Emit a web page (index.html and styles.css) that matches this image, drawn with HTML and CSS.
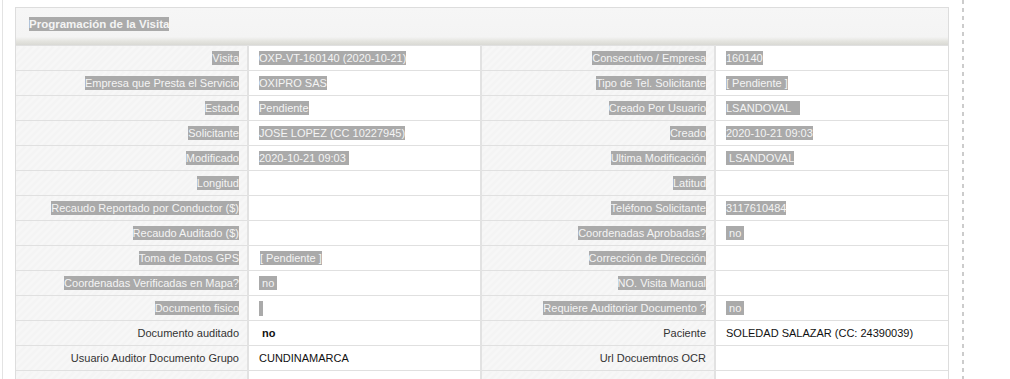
FILE: index.html
```html
<!DOCTYPE html>
<html lang="es">
<head>
<meta charset="utf-8">
<title>Programación de la Visita</title>
<link rel="stylesheet" href="styles.css">
</head>
<body>
<div class="page">
  <div class="rail"></div>
  <div class="panel">
    <div class="panel-head"><span class="sel">Programación de la Visita</span></div>
    <table class="grid">
      <tr><td class="lbl"><span class="sel">Visita</span></td><td class="val"><span class="sel">OXP-VT-160140 (2020-10-21)</span></td><td class="lbl"><span class="sel">Consecutivo / Empresa</span></td><td class="val"><span class="sel">160140</span></td></tr>
      <tr><td class="lbl"><span class="sel">Empresa que Presta el Servicio</span></td><td class="val"><span class="sel">OXIPRO SAS</span></td><td class="lbl"><span class="sel">Tipo de Tel. Solicitante</span></td><td class="val"><span class="sel">[ Pendiente ]</span></td></tr>
      <tr><td class="lbl"><span class="sel">Estado</span></td><td class="val"><span class="sel">Pendiente</span></td><td class="lbl"><span class="sel">Creado Por Usuario</span></td><td class="val"><span class="sel">LSANDOVAL&nbsp;&nbsp;&nbsp;</span></td></tr>
      <tr><td class="lbl"><span class="sel">Solicitante</span></td><td class="val"><span class="sel">JOSE LOPEZ (CC 10227945)</span></td><td class="lbl"><span class="sel">Creado</span></td><td class="val"><span class="sel">2020-10-21 09:03</span></td></tr>
      <tr><td class="lbl"><span class="sel">Modificado</span></td><td class="val"><span class="sel">2020-10-21 09:03&nbsp;</span></td><td class="lbl"><span class="sel">Ultima Modificación</span></td><td class="val"><span class="sel">&nbsp;LSANDOVAL</span></td></tr>
      <tr><td class="lbl"><span class="sel">Longitud</span></td><td class="val"></td><td class="lbl"><span class="sel">Latitud</span></td><td class="val"></td></tr>
      <tr><td class="lbl"><span class="sel">Recaudo Reportado por Conductor ($)</span></td><td class="val"></td><td class="lbl"><span class="sel">Teléfono Solicitante</span></td><td class="val"><span class="sel">3117610484</span></td></tr>
      <tr><td class="lbl"><span class="sel">Recaudo Auditado ($)</span></td><td class="val"></td><td class="lbl"><span class="sel">Coordenadas Aprobadas?</span></td><td class="val"><span class="sel">&nbsp;no&nbsp;</span></td></tr>
      <tr><td class="lbl"><span class="sel">Toma de Datos GPS</span></td><td class="val"><span class="sel caret">[ Pendiente ]</span></td><td class="lbl"><span class="sel">Corrección de Dirección</span></td><td class="val"></td></tr>
      <tr><td class="lbl"><span class="sel">Coordenadas Verificadas en Mapa?</span></td><td class="val"><span class="sel">&nbsp;no&nbsp;</span></td><td class="lbl"><span class="sel">NO. Visita Manual</span></td><td class="val"></td></tr>
      <tr><td class="lbl"><span class="sel">Documento fisico</span></td><td class="val"><span class="sel blip"></span></td><td class="lbl"><span class="sel">Requiere Auditoriar Documento ?</span></td><td class="val"><span class="sel">&nbsp;no&nbsp;</span></td></tr>
      <tr><td class="lbl">Documento auditado</td><td class="val"><span class="strong">&nbsp;no</span></td><td class="lbl">Paciente</td><td class="val dark">SOLEDAD SALAZAR (CC: 24390039)</td></tr>
      <tr><td class="lbl">Usuario Auditor Documento Grupo</td><td class="val dark">CUNDINAMARCA</td><td class="lbl">Url Docuemtnos OCR</td><td class="val"></td></tr>
      <tr><td class="lbl">&nbsp;</td><td class="val"></td><td class="lbl"></td><td class="val"></td></tr>
    </table>
  </div>
  <div class="dash"></div>
</div>
</body>
</html>
```
FILE: styles.css
```css
html, body {
  margin: 0;
  padding: 0;
  background: #ffffff;
  height: 379px;
  overflow: hidden;
}

body {
  font-family: "Liberation Sans", Arial, sans-serif;
  font-size: 11px;
  color: #333333;
}

.page {
  display: flex;
  align-items: flex-start;
  height: 379px;
}

.rail {
  width: 1px;
  height: 379px;
  margin-left: 2px;
  background: #e3e3e3;
  flex: none;
}

.panel {
  margin-left: 12px;
  margin-top: 7px;
  width: 932px;
  border: 1px solid #dddddd;
  flex: none;
}

.panel-head {
  height: 37px;
  box-sizing: border-box;
  padding: 10px 0 0 13px;
  font-weight: bold;
  font-size: 11.5px;
  background: linear-gradient(to bottom, #f6f6f6 0%, #f4f4f4 78%, #e4e4df 90%, #d9d9d4 100%);
}

.grid {
  width: 932px;
  border-collapse: collapse;
  table-layout: fixed;
}

.grid td {
  height: 25px;
  padding: 0;
  border-top: 1px solid #e0e0e0;
  vertical-align: middle;
  white-space: nowrap;
  overflow: hidden;
  line-height: 14px;
}

.grid td.lbl {
  width: 232px;
  text-align: right;
  padding-right: 8px;
  box-sizing: border-box;
  border-right: 2px solid #e2e2e2;
  background: repeating-linear-gradient(135deg, #f4f4f4 0px, #f4f4f4 3px, #f7f7f7 3px, #f7f7f7 5px);
}

.grid td.val {
  width: 233px;
  padding-left: 10px;
  box-sizing: border-box;
  background: #ffffff;
}

.grid td.val + td.lbl {
  width: 234px;
  border-left: 2px solid #e2e2e2;
}

.grid td.dark {
  color: #111111;
}

.sel {
  background: #aaaaaa;
  color: #f4f4f4;
  padding: 1px 0;
}

.caret {
  border-left: 1px solid #ffffff;
}

.blip {
  display: inline-block;
  width: 4px;
  height: 15px;
  vertical-align: middle;
  padding: 0;
}

.strong {
  color: #111111;
  font-weight: bold;
}

.dash {
  margin-left: 13px;
  width: 2px;
  height: 379px;
  flex: none;
  background: repeating-linear-gradient(to bottom, #cccccc 0px, #cccccc 4px, transparent 4px, transparent 8px);
}
```
